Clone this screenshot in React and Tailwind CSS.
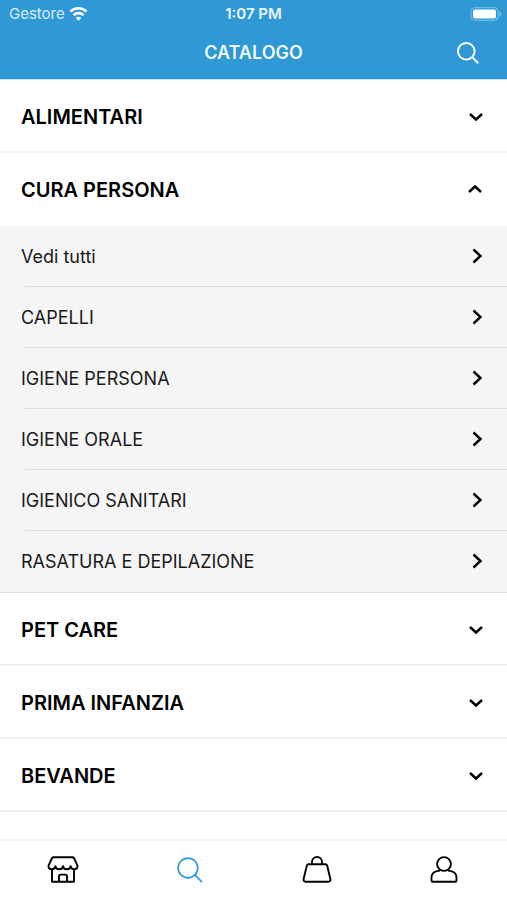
import { useState } from "react";
import clsx from "clsx";

const categories = [
  { name: "ALIMENTARI", items: [] },
  {
    name: "CURA PERSONA",
    items: [
      "Vedi tutti",
      "CAPELLI",
      "IGIENE PERSONA",
      "IGIENE ORALE",
      "IGIENICO SANITARI",
      "RASATURA E DEPILAZIONE",
    ],
  },
  { name: "PET CARE", items: [] },
  { name: "PRIMA INFANZIA", items: [] },
  { name: "BEVANDE", items: [] },
];

function WifiIcon() {
  return (
    <svg width="19" height="14" viewBox="0 0 18 14" fill="none" stroke="white" strokeWidth="2.6" aria-hidden="true">
      <path d="M1 4.6a11.4 11.4 0 0 1 16 0" />
      <path d="M4 8.1a7.2 7.2 0 0 1 10 0" />
      <path d="M9 13.8 6.2 11a4 4 0 0 1 5.6 0z" fill="white" stroke="none" />
    </svg>
  );
}

function BatteryIcon() {
  return (
    <svg width="32" height="14" viewBox="0 0 32 14" aria-hidden="true">
      <rect x="1" y="0.7" width="27" height="12.6" rx="3.6" fill="none" stroke="white" strokeOpacity="0.4" />
      <rect x="3" y="2.5" width="23" height="9" rx="2" fill="white" />
      <path d="M29.5 4.8c1.4.5 1.9 1.3 1.9 2.2s-.5 1.7-1.9 2.2z" fill="white" fillOpacity="0.4" />
    </svg>
  );
}

function SearchIcon({ className }) {
  return (
    <svg className={className} viewBox="0 0 28 28" fill="none" stroke="currentColor" aria-hidden="true">
      <circle cx="11.8" cy="11.8" r="10.6" />
      <path d="M19.3 19.3 27 27" />
    </svg>
  );
}

function Chevron({ direction }) {
  const paths = {
    down: "M4 7l6 5.5L16 7",
    up: "M3 12l6-5.5 6 5.5",
    right: "M7.5 2.5l7 6.5-7 6.5",
  };
  return (
    <svg width="20" height="20" viewBox="0 0 20 20" fill="none" stroke="black" strokeWidth="2.4" aria-hidden="true">
      <path d={paths[direction]} />
    </svg>
  );
}

function StoreIcon() {
  return (
    <svg width="32" height="28" viewBox="0 0 32 28" fill="none" stroke="currentColor" strokeWidth="1.9" strokeLinejoin="round" aria-hidden="true">
      <path d="M6.4 1.2h19.2c.6 0 1 .3 1.300.8l3.500 7.400c.6 2-.8 3.900-3 3.900-2 0-3.600-1.200-3.800-3.200-.2 2-1.700 3.200-3.800 3.200s-3.600-1.200-3.800-3.200c-.2 2-1.700 3.200-3.800 3.200s-3.600-1.200-3.800-3.200c-.2 2-1.800 3.200-3.800 3.200-2.200 0-3.600-1.900-3-3.900L5.100 2c.3-.5.7-.8 1.300-.8z" />
      <path d="M5 13.2v12.6h22V13.2" />
      <path d="M12 25.8v-5.6c0-1 .6-1.600 1.600-1.600h4.800c1 0 1.600.6 1.600 1.600v5.600" />
    </svg>
  );
}

function BagIcon() {
  return (
    <svg width="30" height="28" viewBox="0 0 30 28" fill="none" stroke="currentColor" strokeWidth="1.9" strokeLinejoin="round" aria-hidden="true">
      <path d="M6.500 8.200h17c.9 0 1.400.4 1.600 1.200l3.300 13.600c.4 1.700-.5 2.800-2.100 2.800H3.700c-1.600 0-2.500-1.100-2.100-2.800L4.900 9.400c.2-.8.7-1.200 1.600-1.200z" />
      <path d="M10 8V6a5 5 0 0 1 10 0v2" />
    </svg>
  );
}

function UserIcon() {
  return (
    <svg width="28" height="28" viewBox="0 0 28 28" fill="none" stroke="currentColor" strokeWidth="1.9" strokeLinejoin="round" aria-hidden="true">
      <circle cx="14" cy="8" r="6.9" />
      <path d="M10 14.600C4.600 15 1.500 17.600 1.500 21.200v3.300c0 .9.400 1.300 1.300 1.300h22.400c.9 0 1.300-.4 1.300-1.300v-3.300c0-3.600-3.100-6.200-8.500-6.600" />
    </svg>
  );
}

export default function App() {
  const [open, setOpen] = useState("CURA PERSONA");

  return (
    <div className="min-h-screen flex flex-col bg-white text-black font-[Inter,sans-serif]">
      <header className="bg-[#2f99d6] text-white border-b border-[#c4e2f4]">
        <div className="grid grid-cols-[1fr_auto_1fr] items-center h-7 px-[5px]">
          <div className="flex items-center gap-1 pl-1 text-[15px] text-white/80">
            Gestore
            <WifiIcon />
          </div>
          <div className="text-center text-[15px] font-semibold text-white/90">1:07 PM</div>
          <div className="flex justify-end">
            <BatteryIcon />
          </div>
        </div>
        <div className="grid grid-cols-[1fr_auto_1fr] items-center h-[51px] px-7 pb-0.5">
          <h1 className="col-start-2 text-lg font-semibold text-white/95">CATALOGO</h1>
          <button type="button" aria-label="Cerca" className="justify-self-end cursor-pointer">
            <SearchIcon className="size-[22px] stroke-[2.4]" />
          </button>
        </div>
      </header>

      <main className="flex-1">
        {categories.map(({ name, items }) => {
          const isOpen = open === name && items.length > 0;
          return (
            <section key={name}>
              <h2>
                <button
                  type="button"
                  aria-expanded={isOpen}
                  onClick={() => setOpen(isOpen ? "" : name)}
                  className={clsx(
                    "flex items-center justify-between w-full h-[73px] px-[21px] text-xl font-semibold cursor-pointer",
                    !isOpen && "pt-[3px] border-b-2 border-[#f2f2f2]"
                  )}
                >
                  {name}
                  <Chevron direction={isOpen ? "up" : "down"} />
                </button>
              </h2>
              {isOpen && (
                <ul className="bg-[#f5f5f5] border-b border-[#dedede]">
                  {items.map((item) => (
                    <li key={item} className="group">
                      <a href="#" className="flex items-center justify-between h-15 px-[21px] pt-0.5 text-lg text-[#1a1a1a]">
                        {item}
                        <Chevron direction="right" />
                      </a>
                      <div className="ml-[25px] h-px bg-[#dfdfdf] group-last:bg-transparent" />
                    </li>
                  ))}
                </ul>
              )}
            </section>
          );
        })}
      </main>

      <nav className="sticky bottom-0 grid grid-cols-4 h-[61px] pb-px bg-white border-t-2 border-[#f0f0f0]">
        <a href="#" aria-label="Negozio" className="flex justify-center items-center">
          <StoreIcon />
        </a>
        <a href="#" aria-label="Catalogo" aria-current="page" className="flex justify-center items-center text-[#2f99d6]">
          <SearchIcon className="size-[26px] stroke-[1.8]" />
        </a>
        <a href="#" aria-label="Carrello" className="flex justify-center items-center">
          <BagIcon />
        </a>
        <a href="#" aria-label="Profilo" className="flex justify-center items-center">
          <UserIcon />
        </a>
      </nav>
    </div>
  );
}
